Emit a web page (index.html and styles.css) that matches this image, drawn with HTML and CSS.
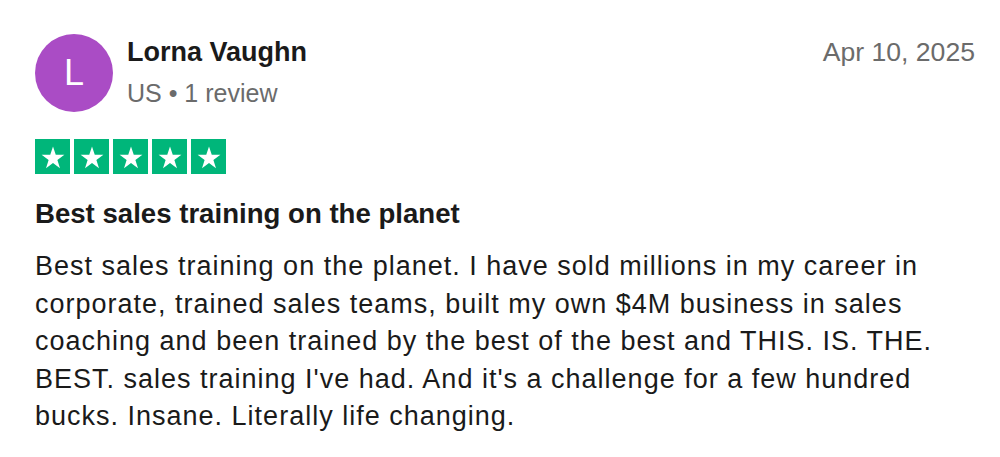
FILE: index.html
```html
<!DOCTYPE html>
<html lang="en">
<head>
<meta charset="utf-8">
<title>Review</title>
<link rel="stylesheet" href="styles.css">
</head>
<body>
<article class="review">
  <header class="review-head">
    <div class="avatar">L</div>
    <div class="consumer">
      <div class="consumer-name">Lorna Vaughn</div>
      <div class="consumer-meta">US • 1 review</div>
    </div>
    <time class="review-date">Apr 10, 2025</time>
  </header>
  <div class="stars" aria-label="Rated 5 out of 5">
    <span class="star"><svg viewBox="0 0 24 24"><path d="M12 3.6l2.2 6.6h6.9l-5.6 4.1 2.1 6.6L12 16.8l-5.6 4.1 2.1-6.6-5.6-4.1h6.9z"/></svg></span>
    <span class="star"><svg viewBox="0 0 24 24"><path d="M12 3.6l2.2 6.6h6.9l-5.6 4.1 2.1 6.6L12 16.8l-5.6 4.1 2.1-6.6-5.6-4.1h6.9z"/></svg></span>
    <span class="star"><svg viewBox="0 0 24 24"><path d="M12 3.6l2.2 6.6h6.9l-5.6 4.1 2.1 6.6L12 16.8l-5.6 4.1 2.1-6.6-5.6-4.1h6.9z"/></svg></span>
    <span class="star"><svg viewBox="0 0 24 24"><path d="M12 3.6l2.2 6.6h6.9l-5.6 4.1 2.1 6.6L12 16.8l-5.6 4.1 2.1-6.6-5.6-4.1h6.9z"/></svg></span>
    <span class="star"><svg viewBox="0 0 24 24"><path d="M12 3.6l2.2 6.6h6.9l-5.6 4.1 2.1 6.6L12 16.8l-5.6 4.1 2.1-6.6-5.6-4.1h6.9z"/></svg></span>
  </div>
  <h2 class="review-title">Best sales training on the planet</h2>
  <p class="review-text">Best sales training on the planet. I have sold millions in my career in corporate, trained sales teams, built my own $4M business in sales coaching and been trained by the best of the best and THIS. IS. THE. BEST. sales training I've had. And it's a challenge for a few hundred bucks. Insane. Literally life changing.</p>
</article>
</body>
</html>
```

FILE: styles.css
```css
html, body {
  margin: 0;
  padding: 0;
  background: #ffffff;
}

body {
  font-family: "Liberation Sans", Arial, Helvetica, sans-serif;
  color: #1a1a1a;
}

.review {
  padding: 34px 25px 0 35px;
}

.review-head {
  display: flex;
  align-items: flex-start;
}

.avatar {
  width: 78px;
  height: 78px;
  border-radius: 50%;
  background: #aa4cc5;
  color: #ffffff;
  display: flex;
  align-items: center;
  justify-content: center;
  font-size: 36px;
  flex: none;
}

.consumer {
  margin-left: 14px;
  padding-top: 2px;
  flex: 1;
}

.consumer-name {
  font-size: 27px;
  font-weight: 700;
  line-height: 32px;
  color: #1a1a1a;
}

.consumer-meta {
  margin-top: 10px;
  font-size: 25px;
  line-height: 30px;
  color: #6b6b6b;
}

.review-date {
  font-size: 26.6px;
  line-height: 32px;
  color: #6b6b6b;
  padding-top: 2px;
}

.stars {
  display: flex;
  gap: 4px;
  margin-top: 27px;
}

.star {
  width: 35px;
  height: 35px;
  background: #00b67a;
  display: flex;
  align-items: center;
  justify-content: center;
}

.star svg {
  width: 30px;
  height: 30px;
  fill: #ffffff;
}

.review-title {
  margin: 24px 0 0;
  font-size: 27.6px;
  font-weight: 700;
  line-height: 32px;
  color: #1a1a1a;
}

.review-text {
  margin: 18px 0 0;
  font-size: 27px;
  letter-spacing: 1px;
  line-height: 37.5px;
  color: #1a1a1a;
  max-width: 905px;
}
```
